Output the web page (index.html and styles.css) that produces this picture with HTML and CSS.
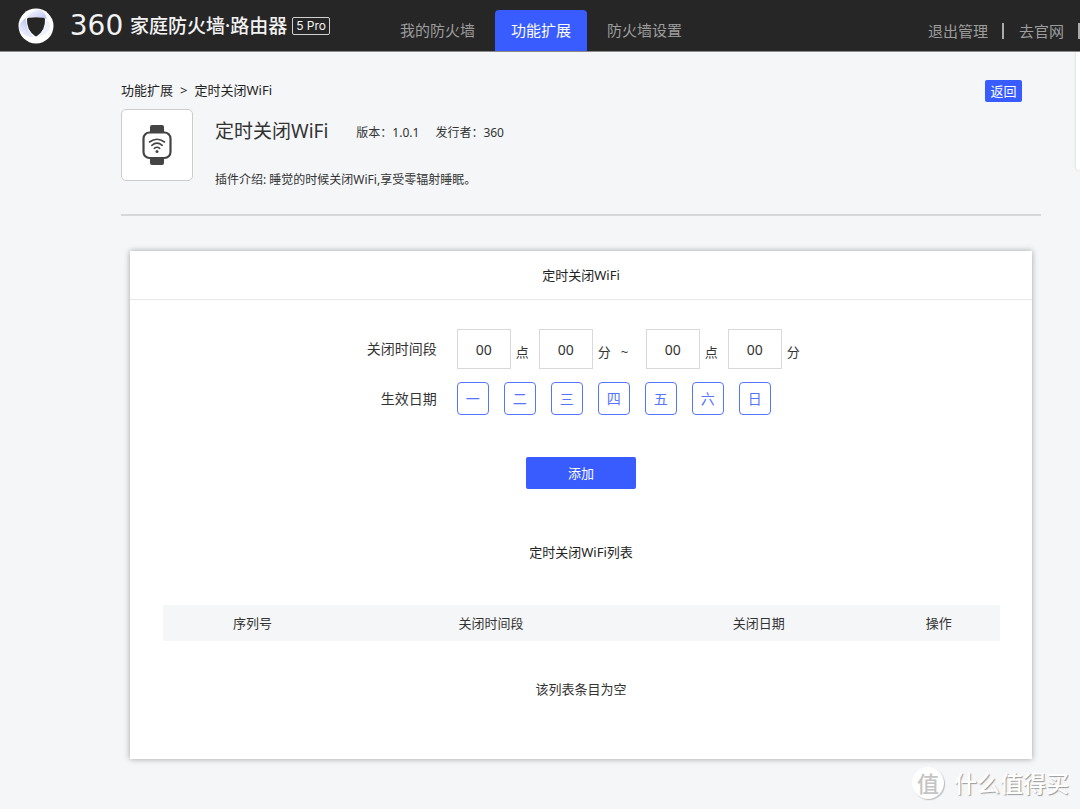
FILE: index.html
```html
<!DOCTYPE html>
<html lang="zh-CN">
<head>
<meta charset="utf-8">
<meta name="viewport" content="width=device-width, initial-scale=1">
<title>定时关闭WiFi</title>
<link rel="stylesheet" href="styles.css">
</head>
<body>
<header class="topbar">
  <div class="brand">
    <svg class="brand-mark" viewBox="0 0 36 36" aria-hidden="true">
      <defs>
        <linearGradient id="shade" x1="0" y1="0" x2="1" y2="1">
          <stop offset="0" stop-color="#ffffff"/>
          <stop offset="1" stop-color="#b9c2f4"/>
        </linearGradient>
        <linearGradient id="shade-left" x1="0" y1="1" x2="0.6" y2="0">
          <stop offset="0" stop-color="#ffffff"/>
          <stop offset="1" stop-color="#b4bdf2"/>
        </linearGradient>
      </defs>
      <circle cx="18" cy="18" r="17.500" fill="#fff"/>
      <path d="M8 10Q13 2 22 1.500Q28 5 29 11Q18 7 8 10Z" fill="url(#shade)"/>
      <path d="M1 21Q1 14 8 10Q8 23 16 29Q5 30 1 21Z" fill="url(#shade-left)"/>
      <path d="M28 11Q28 23 17 29Q26 29 31 22Q34 16 28 11Z" fill="#eef0fc"/>
      <path d="M9 11.500Q9 10 10.500 9.800Q18 8.500 25.500 9.800Q27 10 27 11.500Q27.500 22 19 28Q18 28.700 17 28Q8.500 22 9 11.500Z" fill="#262626"/>
    </svg>
    <span class="brand-number">360</span>
    <span class="brand-name">家庭防火墙·路由器</span>
    <span class="brand-model">5 Pro</span>
  </div>
  <nav class="nav">
    <a class="nav-item" href="#">我的防火墙</a>
    <a class="nav-item nav-item-active" href="#" aria-current="page">功能扩展</a>
    <a class="nav-item" href="#">防火墙设置</a>
  </nav>
  <div class="account">
    <a class="account-link" href="#">退出管理</a>
    <a class="account-link" href="#">去官网</a>
  </div>
</header>
<aside class="side-panel"></aside>
<main class="page">
  <div class="crumb-row">
    <div class="crumbs"><a class="crumb" href="#">功能扩展</a><span>&gt;</span><span>定时关闭WiFi</span></div>
    <button class="back" type="button">返回</button>
  </div>
  <section class="plugin">
    <div class="plugin-icon">
      <svg class="watch" viewBox="0 0 30 40" aria-hidden="true">
        <path d="M8 7V2Q8 0 10 0H20Q22 0 22 2V7ZM8 33V38Q8 40 10 40H20Q22 40 22 38V33Z" fill="#444"/>
        <rect x="1.500" y="7.500" width="27" height="25.500" rx="6" fill="#fff" stroke="#444" stroke-width="2.200"/>
        <path d="M7.500 17Q15 11.500 22.500 17M9.800 20.300Q15 16 20.200 20.300M12.300 23.300Q15 21.200 17.700 23.300" fill="none" stroke="#444" stroke-width="1.600" stroke-linecap="round"/>
        <circle cx="15" cy="26.500" r="1.500" fill="#444"/>
      </svg>
    </div>
    <div class="plugin-info">
      <div class="plugin-head">
        <h1 class="plugin-title">定时关闭WiFi</h1>
        <span class="meta">版本：1.0.1</span>
        <span class="meta">发行者：360</span>
      </div>
      <p class="plugin-desc">插件介绍: 睡觉的时候关闭WiFi,享受零辐射睡眠。</p>
    </div>
  </section>
  <section class="card">
    <h2 class="card-title">定时关闭WiFi</h2>
    <form class="form">
      <label class="form-label" for="start-hour">关闭时间段</label>
      <div class="time-row">
        <input class="time" id="start-hour" type="text" value="00"><span class="unit">点</span>
        <input class="time" type="text" value="00" aria-label="开始分钟"><span class="unit">分</span>
        <span class="unit-range">~</span>
        <input class="time" type="text" value="00" aria-label="结束小时"><span class="unit">点</span>
        <input class="time" type="text" value="00" aria-label="结束分钟"><span class="unit">分</span>
      </div>
      <span class="form-label" id="days-label">生效日期</span>
      <div class="days" role="group" aria-labelledby="days-label">
        <button class="day" type="button">一</button>
        <button class="day" type="button">二</button>
        <button class="day" type="button">三</button>
        <button class="day" type="button">四</button>
        <button class="day" type="button">五</button>
        <button class="day" type="button">六</button>
        <button class="day" type="button">日</button>
      </div>
      <button class="add" type="button">添加</button>
    </form>
    <h3 class="list-title">定时关闭WiFi列表</h3>
    <table class="list">
      <thead>
        <tr><th class="col-no">序列号</th><th class="col-time">关闭时间段</th><th class="col-date">关闭日期</th><th class="col-action">操作</th></tr>
      </thead>
      <tbody>
        <tr><td class="empty" colspan="4">该列表条目为空</td></tr>
      </tbody>
    </table>
  </section>
</main>
<div class="watermark"><span class="watermark-badge">值</span><span>什么值得买</span></div>
</body>
</html>
```
FILE: styles.css
```css
* {
  box-sizing: border-box;
}

body {
  position: relative;
  min-height: 100vh;
  margin: 0;
  overflow-x: hidden;
  background: #f4f6f8;
  color: #333;
  font: 14px/20px "Noto Sans", "Noto Sans CJK SC", sans-serif;
}

a {
  color: inherit;
  text-decoration: none;
}

button,
input {
  margin: 0;
  padding: 0;
  font: inherit;
}

h1,
h2,
h3,
p {
  margin: 0;
  font-weight: 400;
}

.topbar {
  display: flex;
  height: 52px;
  padding-left: 18px;
  border-bottom: 1px solid #8a8a8a;
  background: #262626;
  white-space: nowrap;
}

.brand {
  display: flex;
  align-items: center;
  width: 366px;
  color: #f2f2f2;
}

.brand-mark {
  width: 36px;
  height: 36px;
}

.brand-number {
  width: 67px;
  margin-left: 9px;
  font: 28px/32px "DejaVu Sans", sans-serif;
  text-align: center;
}

.brand-name {
  font-size: 19px;
  font-weight: 500;
}

.brand-model {
  margin-left: 5px;
  padding: 0 3px;
  border: 1px solid #d0d0d0;
  border-radius: 2px;
  font: 12px/16px Inter, sans-serif;
}

.nav {
  display: flex;
  align-items: flex-end;
  gap: 4px;
}

.nav-item {
  height: 41px;
  padding: 0 16px;
  border-radius: 4px 4px 0 0;
  color: #9d9d9d;
  font-size: 15px;
  line-height: 41px;
}

.nav-item-active {
  background: #385cff;
  color: #fff;
}

.account {
  display: flex;
  align-items: center;
  margin-left: auto;
  padding-top: 10px;
}

.account-link {
  padding-right: 14px;
  margin-right: 15px;
  border-right: 2px solid #aaa;
  color: #9d9d9d;
  font-size: 15px;
  line-height: 16px;
}

.account-link:last-child {
  margin-right: 0;
}

.side-panel {
  position: absolute;
  top: 52px;
  right: 0;
  width: 4px;
  height: 118px;
  border-radius: 0 0 0 3px;
  background: #fff;
  box-shadow: 0 0 3px rgba(0, 0, 0, 0.15);
}

.page {
  padding: 28px 39px 50px 121px;
}

.crumb-row {
  display: flex;
  justify-content: space-between;
  padding-right: 19px;
}

.crumbs {
  display: flex;
  gap: 7px;
  color: #222;
  font-size: 13px;
}

.back {
  width: 37px;
  height: 22px;
  border: 0;
  border-radius: 2px;
  background: #385cff;
  color: #fff;
  font-size: 13px;
  line-height: 22px;
}

.plugin {
  display: flex;
  gap: 22px;
  padding: 7px 0 24px;
  border-bottom: 2px solid #d5d7d9;
}

.plugin-icon {
  display: flex;
  align-items: center;
  justify-content: center;
  width: 72px;
  height: 72px;
  border: 1px solid #ccc;
  border-radius: 5px;
  background: #fff;
}

.watch {
  width: 30px;
  height: 40px;
}

.plugin-info {
  padding-top: 8px;
  font-size: 12px;
}

.plugin-head {
  display: flex;
  align-items: center;
}

.plugin-title {
  margin-right: 12px;
  font-size: 19px;
  line-height: 28px;
}

.meta {
  margin-left: 16px;
  padding-top: 4px;
}

.plugin-desc {
  margin-top: 25px;
}

.card {
  margin: 35px 9px 0;
  padding-bottom: 50px;
  background: #fff;
  box-shadow: 0 0 6px rgba(0, 0, 0, 0.35);
}

.card-title {
  border-bottom: 1px solid #e8e8e8;
  color: #222;
  font-size: 13px;
  line-height: 48px;
  text-align: center;
}

.form {
  display: grid;
  grid-template-columns: 34% 1fr;
  column-gap: 20px;
  row-gap: 13px;
  align-items: center;
  padding-top: 29px;
}

.form-label {
  text-align: right;
}

.time-row,
.days {
  display: flex;
  align-items: center;
}

.time {
  width: 54px;
  height: 40px;
  border: 1px solid #d9d9d9;
  background: #fff;
  color: #333;
  text-align: center;
}

.unit,
.unit-range {
  width: 28px;
  padding: 6px 0 0 5px;
  font-size: 13px;
}

.unit-range {
  width: 25px;
  padding-left: 0;
}

.days {
  gap: 15px;
}

.day {
  width: 32px;
  height: 33px;
  border: 1px solid #5574ff;
  border-radius: 4px;
  background: #fff;
  color: #5574ff;
}

.add {
  grid-column: 1 / -1;
  justify-self: center;
  width: 110px;
  height: 32px;
  margin-top: 29px;
  border: 0;
  border-radius: 2px;
  background: #385cff;
  color: #fff;
  font-size: 13px;
}

.list-title {
  margin-top: 53px;
  color: #222;
  font-size: 13px;
  text-align: center;
}

.list {
  width: calc(100% - 65px);
  margin: 43px auto 0;
  border-collapse: collapse;
  table-layout: fixed;
  text-align: center;
}

.list th {
  height: 36px;
  padding: 0;
  background: #f5f6f8;
  font-weight: 400;
}

.list th,
.list td {
  font-size: 13px;
}

.col-no {
  width: 21.5%;
}

.col-time {
  width: 35.5%;
}

.col-date {
  width: 28.5%;
}

.col-action {
  width: 14.5%;
}

.list .empty {
  padding: 38px 0 10px;
}

.watermark {
  position: absolute;
  right: 11px;
  bottom: 10px;
  display: flex;
  align-items: center;
  gap: 10px;
  color: #fff;
  font-size: 23px;
  font-weight: 500;
  line-height: 32px;
  text-shadow: 1px 1px 1px #999;
}

.watermark-badge {
  width: 32px;
  height: 32px;
  border-radius: 50%;
  background: #fff;
  box-shadow: 1px 1px 1px #bbb;
  color: #c4c4c4;
  font-size: 22px;
  text-align: center;
  text-shadow: none;
}
```
